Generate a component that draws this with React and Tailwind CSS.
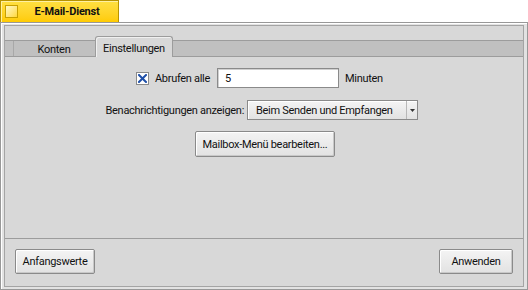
export default function App() {
  const btn =
    "flex items-center justify-center whitespace-nowrap border border-[#8a8a8a] rounded-[2px] bg-gradient-to-b from-[#f4f4f4] to-[#e2e2e2] shadow-[inset_1px_1px_0_#ffffff,inset_-1px_-1px_0_#c8c8c8] text-[#111]";
  return (
    <div className="w-[528px] h-[290px] bg-white font-['Roboto',sans-serif] text-[11px] tracking-[-0.3px] text-[#111] leading-none whitespace-nowrap">
      {/* title tab */}
      <div className="h-[22px] w-[119px] flex items-center border border-b-0 border-[#b89400] bg-gradient-to-b from-[#ffe040] to-[#ffcb00] shadow-[inset_1px_1px_0_#fff0a0]">
        <div className="ml-[4px] w-[13px] h-[13px] border border-[#c8a000] bg-gradient-to-br from-[#fff8c0] to-[#ffd830]" />
        <div className="flex-1 text-center font-bold tracking-[-0.2px] pr-[2px]">E-Mail-Dienst</div>
      </div>
      {/* window frame */}
      <div className="h-[268px] border border-[#989898] bg-[#e2e2e2] pt-[2px] px-[3px] pb-[2px] shadow-[inset_1px_1px_0_#ffffff]">
        <div className="h-full border border-[#a4a4a4] bg-[#d8d8d8] flex flex-col">
          {/* tab strip */}
          <div className="h-[14px] shrink-0" />
          <div className="relative h-[17px] shrink-0 border-t border-b border-[#9c9c9c] bg-[#c0c0c0] flex">
            <div className="w-[9px] border-r border-[#a8a8a8]" />
            <div className="w-[80px] flex items-center justify-center pt-[1px]">Konten</div>
            <div className="absolute left-[90px] top-[-5px] w-[78px] h-[21px] bg-[#d8d8d8] border border-b-0 border-[#9c9c9c] rounded-t-[3px] shadow-[inset_1px_1px_0_#f0f0f0] flex items-center justify-center pt-[2px]">
              Einstellungen
            </div>
          </div>
          {/* content */}
          <div className="h-[182px] shrink-0 border-b border-[#9c9c9c]">
            <div className="flex items-center h-[20px] mt-[11px]">
              <div className="w-[205px] shrink-0 flex items-center justify-end">
                <div className="shrink-0 w-[13px] h-[13px] border border-[#8a8a8a] bg-white flex items-center justify-center">
                  <svg width="9" height="9" viewBox="0 0 9 9">
                    <path d="M1 1L8 8M8 1L1 8" stroke="#1e4fa8" strokeWidth="2" strokeLinecap="square" />
                  </svg>
                </div>
                <span className="ml-[6px]">Abrufen alle</span>
              </div>
              <div className="ml-[7px] shrink-0 w-[122px] h-[20px] border border-[#8a8a8a] bg-white flex items-center pl-[7px] shadow-[inset_1px_1px_0_#d0d0d0]">
                5
              </div>
              <span className="ml-[6px]">Minuten</span>
            </div>
            <div className="flex items-center h-[20px] mt-[12px]">
              <span className="w-[239px] shrink-0 text-right">Benachrichtigungen anzeigen:</span>
              <div className="ml-[3px] shrink-0 w-[171px] h-[20px] border border-[#8a8a8a] flex bg-gradient-to-b from-[#f4f4f4] to-[#e2e2e2] shadow-[inset_1px_1px_0_#ffffff]">
                <div className="flex-1 flex items-center pl-[8px]">Beim Senden und Empfangen</div>
                <div className="w-[11px] border-l border-[#b8b8b8] flex items-center justify-center">
                  <svg width="5" height="3" viewBox="0 0 5 3">
                    <path d="M0 0H5L2.5 3Z" fill="#333" />
                  </svg>
                </div>
              </div>
            </div>
            <div className="flex mt-[11px] pl-[190px]">
              <div className={btn + " w-[140px] h-[26px]"}>Mailbox-Menü bearbeiten...</div>
            </div>
          </div>
          {/* bottom */}
          <div className="flex-1 flex items-start justify-between px-[10px] pt-[10px]">
            <div className={btn + " w-[80px] h-[25px]"}>Anfangswerte</div>
            <div className={btn + " w-[74px] h-[25px]"}>Anwenden</div>
          </div>
        </div>
      </div>
    </div>
  );
}
